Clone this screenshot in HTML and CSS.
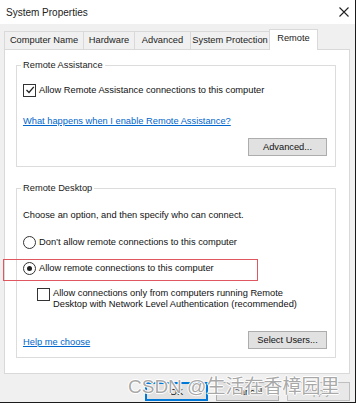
FILE: index.html
```html
<!DOCTYPE html>
<html>
<head>
<meta charset="utf-8">
<link rel="stylesheet" href="styles.css">
</head>
<body>
<div class="window">
  <div class="titlebar">
    <span class="title">System Properties</span>
    <svg class="close" width="10" height="10" viewBox="0 0 10 10"><path d="M0.5 0.5 L9.5 9.5 M9.5 0.5 L0.5 9.5" stroke="#222" stroke-width="1.1"/></svg>
  </div>
  <div class="body">
    <div class="tabs">
      <div class="tab t1">Computer Name</div>
      <div class="tab t2">Hardware</div>
      <div class="tab t3">Advanced</div>
      <div class="tab t4">System Protection</div>
      <div class="tab active">Remote</div>
    </div>
    <div class="panel">
      <fieldset class="group g1">
        <legend>Remote Assistance</legend>
        <div class="row r-check">
          <span class="checkbox checked"><svg width="10" height="10" viewBox="0 0 10 10"><path d="M1.5 5 L4 7.5 L8.8 1.8" fill="none" stroke="#222" stroke-width="1.3"/></svg></span>
          <span>Allow Remote Assistance connections to this computer</span>
        </div>
        <div class="row r-link"><a class="link">What happens when I enable Remote Assistance?</a></div>
        <div class="btn-row r-adv"><span class="btn">Advanced...</span></div>
      </fieldset>
      <fieldset class="group g2">
        <legend>Remote Desktop</legend>
        <div class="row r-choose">Choose an option, and then specify who can connect.</div>
        <div class="row r-radio1"><span class="radio"></span><span>Don’t allow remote connections to this computer</span></div>
        <div class="row r-radio2"><span class="radio on"></span><span>Allow remote connections to this computer</span></div>
        <div class="row r-nla">
          <span class="checkbox"></span>
          <span class="nla-text">Allow connections only from computers running Remote<br>Desktop with Network Level Authentication (recommended)</span>
        </div>
        <div class="help-row">
          <a class="link">Help me choose</a>
          <span class="btn">Select Users...</span>
        </div>
      </fieldset>
    </div>
    <div class="footer">
      <span class="btn fbtn ok">OK</span>
      <span class="btn fbtn">Cancel</span>
      <span class="btn fbtn disabled">Apply</span>
    </div>
  </div>
  <div class="highlight"></div>
  <div class="watermark">CSDN @生活在香樟园里</div>
</div>
</body>
</html>
```

FILE: styles.css
```css
html, body {
  margin: 0;
  padding: 0;
  background: #ffffff;
}
.window {
  position: relative;
  width: 355px;
  height: 402px;
  border-right: 1px solid #1b1b1b;
  border-bottom: 1px solid #1b1b1b;
  background: #f0f0f0;
  display: flex;
  flex-direction: column;
  font-family: "Liberation Sans", Arial, sans-serif;
  font-size: 9.3px;
  color: #111;
  overflow: hidden;
}
.titlebar {
  height: 24px;
  background: #ffffff;
  display: flex;
  align-items: center;
  justify-content: space-between;
  padding: 0 6px 0 6px;
  flex-shrink: 0;
}
.title {
  font-size: 10px;
  color: #222;
}
.body {
  padding: 5px 5px 0 4px;
  display: flex;
  flex-direction: column;
}
.tabs {
  display: flex;
  align-items: flex-end;
  height: 20px;
}
.tab {
  height: 18px;
  line-height: 17px;
  border: 1px solid #d9d9d9;
  border-bottom: none;
  border-right: none;
  background: #f0f0f0;
  text-align: center;
  color: #222;
  box-sizing: border-box;
}
.t1 { width: 79px; }
.t2 { width: 51px; }
.t3 { width: 56px; }
.t4 { width: 79px; }
.tab.active {
  width: 49px;
  height: 21px;
  line-height: 17px;
  background: #ffffff;
  border: 1px solid #d9d9d9;
  border-bottom: none;
  margin-bottom: -1px;
  position: relative;
  z-index: 1;
}
.panel {
  width: 346px;
  height: 325px;
  box-sizing: border-box;
  background: #ffffff;
  border: 1px solid #d9d9d9;
  padding: 0 13px 0 11px;
}
.group {
  margin: 0;
  border: 1px solid #dcdcdc;
  padding: 0 8px 0 6px;
  display: flex;
  flex-direction: column;
}
legend {
  padding: 0 2px;
  margin-left: -2px;
  line-height: 14px;
  color: #222;
}
.g1 {
  margin-top: 8px;
  padding-bottom: 10px;
}
.g2 {
  margin-top: 14px;
  padding-bottom: 8px;
}
.row {
  display: flex;
  align-items: center;
  height: 14px;
  line-height: 14px;
  white-space: nowrap;
}
.r-check { margin-top: 11px; }
.r-link { margin-top: 17px; }
.btn-row {
  display: flex;
  justify-content: flex-end;
}
.r-adv { margin-top: 10px; }
.r-choose { margin-top: 13px; }
.r-radio1 { margin-top: 13px; }
.r-radio2 { margin-top: 12px; }
.r-nla {
  margin-top: 13px;
  height: 22px;
  align-items: flex-start;
  padding-left: 14px;
}
.nla-text {
  line-height: 11px;
}
.checkbox {
  width: 11px;
  height: 11px;
  border: 1px solid #333;
  background: #fff;
  margin-right: 3px;
  display: inline-flex;
  align-items: center;
  justify-content: center;
  flex-shrink: 0;
}
.radio {
  width: 11px;
  height: 11px;
  border: 1px solid #333;
  border-radius: 50%;
  background: #fff;
  margin-right: 3px;
  display: inline-flex;
  align-items: center;
  justify-content: center;
  flex-shrink: 0;
}
.radio.on::after {
  content: "";
  width: 5px;
  height: 5px;
  border-radius: 50%;
  background: #222;
}
.link {
  color: #0066cc;
  text-decoration: underline;
  cursor: pointer;
}
.btn {
  width: 79px;
  height: 18px;
  box-sizing: border-box;
  border: 1px solid #adadad;
  background: #e1e1e1;
  display: inline-flex;
  align-items: center;
  justify-content: center;
  color: #111;
}
.help-row {
  display: flex;
  justify-content: space-between;
  align-items: flex-end;
  margin-top: 21px;
}
.help-row .link {
  line-height: 14px;
}
.footer {
  display: flex;
  justify-content: flex-end;
  gap: 8px;
  margin-top: 8px;
}
.fbtn {
  width: 63px;
  height: 19px;
}
.ok {
  border: 2px solid #0078d7;
}
.disabled {
  color: #a0a0a0;
  border-color: #bfbfbf;
  background: #e8e8e8;
}
.highlight {
  position: absolute;
  left: 3px;
  top: 259px;
  width: 255px;
  height: 22px;
  box-sizing: border-box;
  border: 1px solid #e0575f;
  pointer-events: none;
}
.watermark {
  position: absolute;
  left: 128px;
  top: 375px;
  font-family: "Liberation Sans", "Noto Sans CJK SC", sans-serif;
  font-size: 19px;
  line-height: 24px;
  color: rgba(140, 140, 140, 0.75);
  white-space: nowrap;
  text-shadow: -1px 0 #fff, 1px 0 #fff, 0 -1px #fff, 0 1px #fff;
}
```
